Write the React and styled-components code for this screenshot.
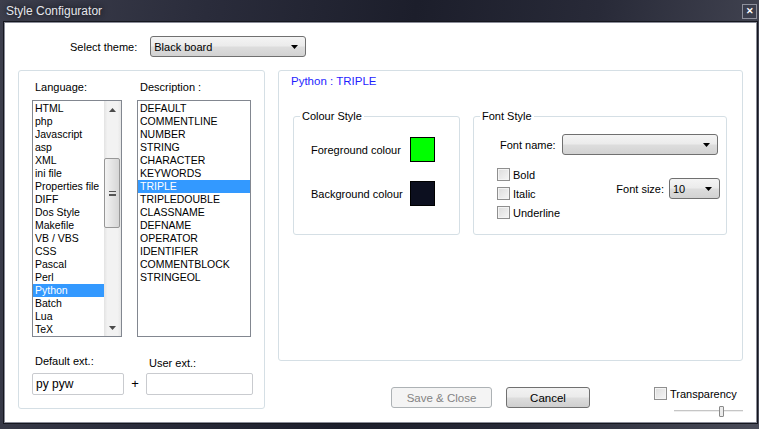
import React from 'react'
import styled, { createGlobalStyle } from 'styled-components'

const Global = createGlobalStyle`
  html, body { margin: 0; padding: 0; background: #1f2130; }
  * { box-sizing: border-box; }
`

const languages = [
  'HTML', 'php', 'Javascript', 'asp', 'XML', 'ini file', 'Properties file', 'DIFF',
  'Dos Style', 'Makefile', 'VB / VBS', 'CSS', 'Pascal', 'Perl', 'Python', 'Batch', 'Lua', 'TeX',
]

const descriptions = [
  'DEFAULT', 'COMMENTLINE', 'NUMBER', 'STRING', 'CHARACTER', 'KEYWORDS', 'TRIPLE',
  'TRIPLEDOUBLE', 'CLASSNAME', 'DEFNAME', 'OPERATOR', 'IDENTIFIER', 'COMMENTBLOCK', 'STRINGEOL',
]

const Arrow = ({ dir = 'down', color = '#000' }) => (
  <svg width="7" height="4" viewBox="0 0 7 4">
    {dir === 'down' ? <path d="M0 0h7L3.5 4z" fill={color} /> : <path d="M0 4h7L3.5 0z" fill={color} />}
  </svg>
)

const Combo = ({ value, width }) => (
  <ComboBox $width={width}>
    <span>{value}</span>
    <Arrow />
  </ComboBox>
)

const Check = ({ label }) => (
  <CheckRow>
    <CheckBox />
    <span>{label}</span>
  </CheckRow>
)

const App = () => (
  <>
    <Global />
    <Window>
      <TitleBar>
        <span>Style Configurator</span>
        <CloseBtn>✕</CloseBtn>
      </TitleBar>
      <Client>
        <ThemeRow>
          <span>Select theme:</span>
          <Combo value="Black board" width={156} />
        </ThemeRow>
        <Body>
          <LeftGroup>
            <Lists>
              <Column $width={90}>
                <Label>Language:</Label>
                <ListBox>
                  <Items>
                    {languages.map(l => (
                      <Item key={l} $selected={l === 'Python'}>{l}</Item>
                    ))}
                  </Items>
                  <ScrollBar>
                    <ScrollArrow><Arrow dir="up" color="#4a4a4a" /></ScrollArrow>
                    <Track>
                      <Thumb>
                        <Grip />
                      </Thumb>
                    </Track>
                    <ScrollArrow><Arrow dir="down" color="#4a4a4a" /></ScrollArrow>
                  </ScrollBar>
                </ListBox>
              </Column>
              <Column $width={114}>
                <Label>Description :</Label>
                <ListBox>
                  <Items>
                    {descriptions.map(d => (
                      <Item key={d} $selected={d === 'TRIPLE'}>{d}</Item>
                    ))}
                  </Items>
                </ListBox>
              </Column>
            </Lists>
            <ExtGrid>
              <Label>Default ext.:</Label>
              <span />
              <Label $shift={2}>User ext.:</Label>
              <TextInput>py pyw</TextInput>
              <Plus>+</Plus>
              <TextInput />
            </ExtGrid>
          </LeftGroup>
          <RightColumn>
            <Panel>
              <Heading>Python : TRIPLE</Heading>
              <Groups>
                <Group $width={167}>
                  <legend>Colour Style</legend>
                  <ColourGrid>
                    <span>Foreground colour</span>
                    <Swatch $color="#00ff00" />
                    <span>Background colour</span>
                    <Swatch $color="#0c0f1f" />
                  </ColourGrid>
                </Group>
                <Group $width={254}>
                  <legend>Font Style</legend>
                  <FontNameRow>
                    <span>Font name:</span>
                    <Combo value="" width={156} />
                  </FontNameRow>
                  <FontOptions>
                    <Checks>
                      <Check label="Bold" />
                      <Check label="Italic" />
                      <Check label="Underline" />
                    </Checks>
                    <FontSize>
                      <span>Font size:</span>
                      <Combo value="10" width={51} />
                    </FontSize>
                  </FontOptions>
                </Group>
              </Groups>
            </Panel>
            <BottomRow>
              <Button $disabled $width={101}>Save &amp; Close</Button>
              <Button $width={84}>Cancel</Button>
              <Transparency>
                <Check label="Transparency" />
                <Slider>
                  <SliderThumb />
                </Slider>
              </Transparency>
            </BottomRow>
          </RightColumn>
        </Body>
      </Client>
    </Window>
  </>
)

const Window = styled.div`
  width: 759px;
  height: 429px;
  display: flex;
  flex-direction: column;
  background: linear-gradient(100deg, #3d3f4d 0%, #2a2c3b 25%, #1c1e2b 50%, #282a38 72%, #4a4c59 100%);
  font-family: "Liberation Sans", Arial, sans-serif;
  font-size: 11px;
  color: #000;
  overflow: hidden;
`

const TitleBar = styled.div`
  height: 22px;
  flex: none;
  display: flex;
  align-items: center;
  padding: 0 2px 0 6px;
  color: #e4e6ec;
  font-size: 12px;
  text-shadow: 0 0 6px rgba(0, 0, 0, 0.9);
`

const CloseBtn = styled.div`
  margin-left: auto;
  width: 15px;
  height: 15px;
  border: 1px solid #8e909c;
  background: #3b3e4d;
  color: #fff;
  font-size: 9px;
  font-weight: bold;
  display: flex;
  align-items: center;
  justify-content: center;
  text-shadow: none;
`

const Client = styled.div`
  flex: 1;
  margin: 0 2px 6px 4px;
  background: #fff;
  border: 1px solid #8a8c98;
  box-shadow: 0 0 0 1px #15171f;
  display: flex;
  flex-direction: column;
`

const ThemeRow = styled.div`
  display: flex;
  align-items: center;
  gap: 13px;
  margin-top: 13px;
  padding-left: 65px;
`

const ComboBox = styled.div`
  width: ${p => p.$width}px;
  height: 21px;
  border: 1px solid #707070;
  border-radius: 3px;
  background: linear-gradient(#f4f4f4 0%, #ebebeb 48%, #dddddd 52%, #d2d2d2 100%);
  display: flex;
  align-items: center;
  justify-content: space-between;
  padding: 0 7px 0 3px;
`

const Body = styled.div`
  display: flex;
  gap: 13px;
  margin-top: 13px;
  padding-left: 13px;
`

const LeftGroup = styled.div`
  width: 247px;
  height: 339px;
  border: 1px solid #d5dfe5;
  border-radius: 3px;
  padding: 8px 13px 0;
`

const Lists = styled.div`
  display: flex;
  gap: 15px;
`

const Column = styled.div`
  width: ${p => p.$width}px;
  display: flex;
  flex-direction: column;
`

const Label = styled.div`
  height: 16px;
  line-height: 16px;
  padding-left: 3px;
  padding-top: ${p => p.$shift || 0}px;
  white-space: nowrap;
`

const ListBox = styled.div`
  margin-top: 5px;
  height: 237px;
  border: 1px solid #828790;
  display: flex;
  overflow: hidden;
`

const Items = styled.div`
  flex: 1;
  padding-top: 1px;
  overflow: hidden;
  font-size: 10.5px;
`

const Item = styled.div`
  height: 13px;
  line-height: 13px;
  padding-left: 2px;
  white-space: nowrap;
  background: ${p => (p.$selected ? '#3399ff' : 'transparent')};
  color: ${p => (p.$selected ? '#fff' : '#000')};
`

const ScrollBar = styled.div`
  width: 17px;
  display: flex;
  flex-direction: column;
  background: linear-gradient(90deg, #e3e3e3, #f2f2f2 20%, #f2f2f2 80%, #e6e6e6);
`

const ScrollArrow = styled.div`
  height: 17px;
  display: flex;
  align-items: center;
  justify-content: center;
`

const Track = styled.div`
  flex: 1;
  padding: 40px 1px 0 0;
`

const Thumb = styled.div`
  height: 70px;
  border: 1px solid #979797;
  border-radius: 2px;
  background: linear-gradient(90deg, #f3f3f3, #e4e4e4 50%, #d6d6d6);
  display: flex;
  align-items: center;
  justify-content: center;
`

const Grip = styled.div`
  width: 7px;
  height: 5px;
  border-top: 1px solid #555;
  border-bottom: 1px solid #555;
  background: linear-gradient(#0000 2px, #555 2px, #555 3px, #0000 3px);
`

const ExtGrid = styled.div`
  display: grid;
  grid-template-columns: 92px 22px 107px;
  row-gap: 4px;
  margin-top: 16px;
`

const TextInput = styled.div`
  height: 22px;
  border: 1px solid #c9cbcf;
  border-radius: 2px;
  padding-left: 3px;
  line-height: 20px;
  font-size: 12px;
`

const Plus = styled.div`
  text-align: center;
  line-height: 22px;
  font-size: 13px;
`

const RightColumn = styled.div`
  width: 465px;
  display: flex;
  flex-direction: column;
`

const Panel = styled.div`
  height: 291px;
  border: 1px solid #d5dfe5;
  border-radius: 3px;
  padding: 2px 14px 0 12px;
`

const Heading = styled.div`
  height: 16px;
  line-height: 16px;
  color: #1f1fff;
  font-size: 11.5px;
`

const Groups = styled.div`
  display: flex;
  gap: 13px;
  margin: 19px 0 0 2px;
`

const Group = styled.fieldset`
  width: ${p => p.$width}px;
  height: 127px;
  margin: 0;
  padding: 0;
  border: 1px solid #d5dfe5;
  border-radius: 3px;
  min-width: 0;

  legend {
    margin-left: 6px;
    padding: 0 2px;
    height: 16px;
    line-height: 16px;
  }
`

const ColourGrid = styled.div`
  display: grid;
  grid-template-columns: 99px 25px;
  row-gap: 19px;
  align-items: center;
  padding: 13px 0 0 17px;
`

const Swatch = styled.div`
  width: 25px;
  height: 25px;
  border: 1px solid #000;
  background: ${p => p.$color};
`

const FontNameRow = styled.div`
  display: flex;
  align-items: center;
  gap: 6px;
  margin-top: 10px;
  padding-left: 26px;
`

const FontOptions = styled.div`
  display: flex;
  align-items: flex-start;
  margin-top: 10px;
  padding: 0 6px 0 23px;
`

const Checks = styled.div`
  display: flex;
  flex-direction: column;
`

const CheckRow = styled.div`
  height: 19px;
  display: flex;
  align-items: center;
  gap: 3px;
`

const CheckBox = styled.div`
  width: 13px;
  height: 13px;
  border: 1px solid #8f8f8f;
  background: linear-gradient(135deg, #dcdcdc, #f6f6f6);
  box-shadow: inset 0 0 0 1px #f4f4f4;
`

const FontSize = styled.div`
  margin: 13px 0 0 auto;
  display: flex;
  align-items: center;
  gap: 5px;
`

const BottomRow = styled.div`
  display: flex;
  align-items: flex-start;
  gap: 14px;
  margin-top: 26px;
  padding-left: 113px;
`

const Button = styled.div`
  width: ${p => p.$width}px;
  height: 21px;
  border: 1px solid ${p => (p.$disabled ? '#adb2b5' : '#707070')};
  border-radius: 3px;
  background: ${p =>
    p.$disabled ? '#f4f4f4' : 'linear-gradient(#f2f2f2 0%, #ebebeb 48%, #dddddd 52%, #cfcfcf 100%)'};
  color: ${p => (p.$disabled ? '#838383' : '#000')};
  display: flex;
  align-items: center;
  justify-content: center;
  font-size: 11.5px;
`

const Transparency = styled.div`
  margin-left: auto;
  width: 89px;
  margin-top: -3px;
`

const Slider = styled.div`
  margin: 3px 0 0 20px;
  height: 11px;
  display: flex;
  align-items: center;
  padding-left: 45px;
  background: linear-gradient(#0000 4px, #c6c6c6 4px, #c6c6c6 5px, #eeeeee 5px, #eeeeee 6px, #0000 6px);
`

const SliderThumb = styled.div`
  width: 5px;
  height: 11px;
  border: 1px solid #8a8a8a;
  border-radius: 1px;
  background: #ececec;
`

export default App
